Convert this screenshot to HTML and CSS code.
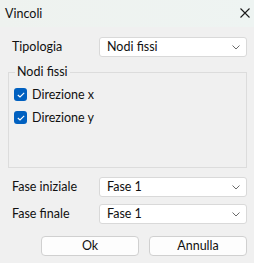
FILE: index.html
```html
<!DOCTYPE html>
<html lang="it">
<head>
  <meta charset="UTF-8" />
  <title>Vincoli</title>
  <link rel="stylesheet" href="styles.css">
</head>
<body>
  <div class="dialog">
    <div class="titlebar">
      <span class="title">Vincoli</span>
      <svg class="close" width="10" height="10" viewBox="0 0 10 10">
        <path d="M0.5 0.5 L9.5 9.5 M9.5 0.5 L0.5 9.5" stroke="#1a1a1a" stroke-width="1.1" fill="none"/>
      </svg>
    </div>

    <div class="content">
      <div class="field-row top-row">
        <span class="label">Tipologia</span>
        <div class="combo">
          <span>Nodi fissi</span>
          <svg class="chevron" width="8" height="5" viewBox="0 0 8 5"><path d="M0.5 0.5 L4 4 L7.5 0.5" stroke="#6b6b6b" fill="none"/></svg>
        </div>
      </div>

      <fieldset class="group">
        <legend>Nodi fissi</legend>
        <div class="check-row">
          <span class="checkbox">
            <svg width="8" height="6" viewBox="0 0 8 6"><path d="M0.8 3 L3 5 L7.2 0.8" stroke="#fff" stroke-width="1.1" fill="none"/></svg>
          </span>
          <span>Direzione x</span>
        </div>
        <div class="check-row">
          <span class="checkbox">
            <svg width="8" height="6" viewBox="0 0 8 6"><path d="M0.8 3 L3 5 L7.2 0.8" stroke="#fff" stroke-width="1.1" fill="none"/></svg>
          </span>
          <span>Direzione y</span>
        </div>
      </fieldset>

      <div class="field-row phase-first">
        <span class="label">Fase iniziale</span>
        <div class="combo">
          <span>Fase 1</span>
          <svg class="chevron" width="8" height="5" viewBox="0 0 8 5"><path d="M0.5 0.5 L4 4 L7.5 0.5" stroke="#6b6b6b" fill="none"/></svg>
        </div>
      </div>
      <div class="field-row">
        <span class="label">Fase finale</span>
        <div class="combo">
          <span>Fase 1</span>
          <svg class="chevron" width="8" height="5" viewBox="0 0 8 5"><path d="M0.5 0.5 L4 4 L7.5 0.5" stroke="#6b6b6b" fill="none"/></svg>
        </div>
      </div>

      <div class="buttons">
        <button class="btn">Ok</button>
        <button class="btn">Annulla</button>
      </div>
    </div>
  </div>
</body>
</html>
```

FILE: styles.css
```css
body {
  margin: 0;
  font-family: Lato, 'Noto Sans', sans-serif;
  font-size: 12.5px;
  line-height: 16px;
  color: #111;
  background: #f0f0f0;
}

.dialog {
  width: 254px;
  height: 263px;
  background: #f0f0f0;
}

.titlebar {
  height: 27px;
  display: flex;
  align-items: center;
  justify-content: space-between;
  padding: 0 4px 0 5px;
  background: linear-gradient(90deg, #eef2ef, #eef4f2);
}

.close {
  margin-bottom: 2px;
}

.content {
  padding: 10px 7px 0 12px;
}

.field-row {
  display: flex;
  align-items: center;
  height: 20px;
  margin-bottom: 7px;
}

.label {
  width: 87px;
}

.combo {
  flex: 1;
  height: 18px;
  display: flex;
  align-items: center;
  justify-content: space-between;
  padding: 0 6px 0 7px;
  background: #fff;
  border: 1px solid #d9d9d9;
  border-radius: 3px;
}

.group {
  margin: 0 0 0 -4px;
  padding: 0 5px;
  height: 102px;
  border: 1px solid #dcdcdc;
  border-radius: 0;
}

.group legend {
  padding: 0 2px;
  margin-left: 1px;
}

.check-row {
  display: flex;
  align-items: center;
  gap: 5px;
  height: 13px;
  margin: 8px 0 10px;
}

.checkbox {
  width: 13px;
  height: 13px;
  border-radius: 3px;
  background: #0060c0;
  display: flex;
  align-items: center;
  justify-content: center;
}

.phase-first {
  margin-top: 9px;
}

.buttons {
  display: flex;
  justify-content: flex-end;
  gap: 10px;
  margin-top: 12px;
}

.btn {
  width: 98px;
  height: 20px;
  font: inherit;
  color: #111;
  background: #fdfdfd;
  border: 1px solid #d0d0d0;
  border-radius: 4px;
  padding: 0;
}
```
